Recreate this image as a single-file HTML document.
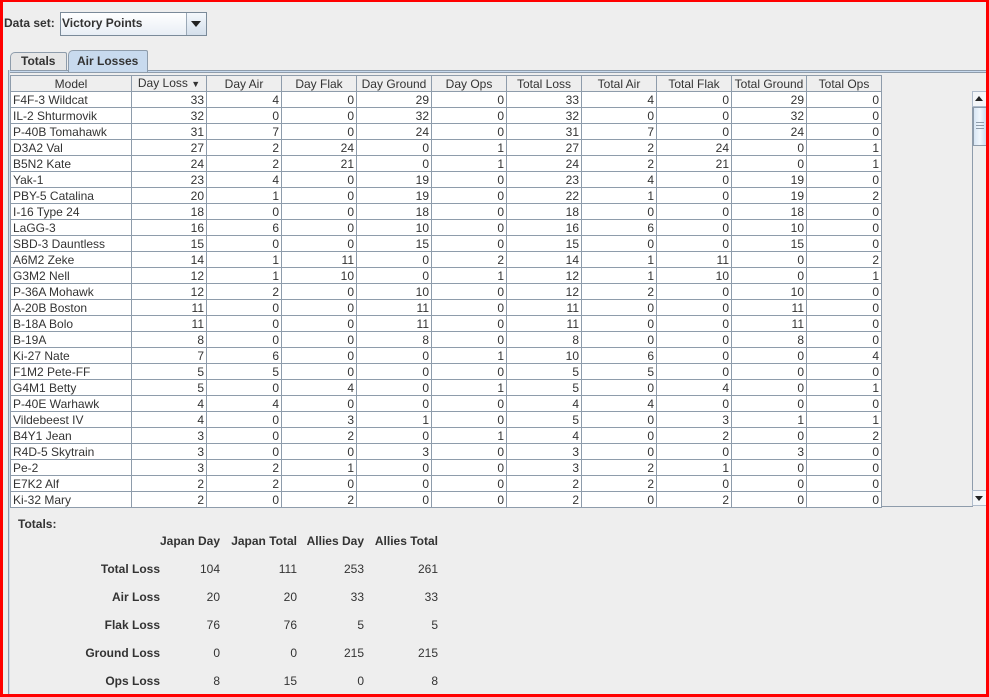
<!DOCTYPE html>
<html><head><meta charset="utf-8"><style>
*{margin:0;padding:0;box-sizing:border-box}
body{width:989px;height:697px;background:#eeeeee;position:relative;overflow:hidden;font-family:"Liberation Sans",sans-serif;font-size:12px;color:#333}
.frame{position:absolute;left:0;top:0;width:989px;height:697px;border:solid #ff0000;border-width:2px 3px 3px 3px;z-index:10;pointer-events:none}
.abs{position:absolute}
b{font-weight:bold}
table{border-collapse:collapse;table-layout:fixed;position:absolute;left:10px;top:75px}
td,th{height:16px;border:1px solid #8e9cab;padding:0 2px;white-space:nowrap;overflow:hidden;font-weight:normal;line-height:14px}
th{background:#eeeeee;text-align:center;color:#333}
td{background:#fff;text-align:right;color:#333}
td:first-child{text-align:left}
.tl{font-weight:bold;color:#333;font-size:12px;position:absolute}
.r{text-align:right}
</style></head><body>
<div class="frame"></div>
<div class="abs" style="left:4px;top:16px;font-weight:bold">Data set:</div>
<div class="abs" style="left:60px;top:12px;width:147px;height:24px;border:1px solid #7a8a99;background:linear-gradient(#fff,#e8eef5)"></div>
<div class="abs" style="left:62px;top:16px;font-weight:bold">Victory Points</div>
<div class="abs" style="left:186px;top:13px;width:20px;height:22px;border-left:1px solid #9aa8b6;background:linear-gradient(#f4f8fc,#d4dfeb)"></div>
<div class="abs" style="left:191px;top:21px;width:0;height:0;border-left:5px solid transparent;border-right:5px solid transparent;border-top:6px solid #222"></div>
<!-- tabs -->
<div class="abs" style="left:10px;top:52px;width:57px;height:19px;border:1px solid #8e9cab;border-bottom:none;border-radius:5px 2px 0 0;background:#e6e6e6"></div>
<div class="abs" style="left:21px;top:54px;font-weight:bold">Totals</div>
<div class="abs" style="left:68px;top:50px;width:80px;height:22px;border:1px solid #8e9cab;border-bottom:none;border-radius:5px 2px 0 0;background:#c8daee;z-index:2"></div>
<div class="abs" style="left:77px;top:54px;font-weight:bold;z-index:3">Air Losses</div>
<div class="abs" style="left:8px;top:70px;width:979px;height:3px;border-top:1px solid #8e9cab;border-bottom:1px solid #8e9cab;background:#c8daee"></div>
<div class="abs" style="left:8px;top:70px;width:2px;height:627px;border-left:1px solid #8e9cab;background:#c8daee"></div>
<div class="abs" style="left:10px;top:506px;width:977px;height:1px;background:#8e9cab"></div>
<!-- scrollbar -->
<div class="abs" style="left:972px;top:91px;width:15px;height:416px;background:#eeeeee;border-left:1px solid #8e9cab"></div>
<div class="abs" style="left:972px;top:91px;width:15px;height:16px;border:1px solid #b0bccb;background:#f4f6f8"></div>
<div class="abs" style="left:975px;top:96px;border-left:4px solid transparent;border-right:4px solid transparent;border-bottom:5px solid #222"></div>
<div class="abs" style="left:973px;top:107px;width:14px;height:39px;border:1px solid #8e9cab;background:linear-gradient(90deg,#d8e6f4,#f0f6fc,#c8dcee)"></div>
<div class="abs" style="left:976px;top:122px;width:8px;height:7px;border-top:1px solid #8e9cab;border-bottom:1px solid #8e9cab"></div>
<div class="abs" style="left:976px;top:125px;width:8px;height:1px;background:#8e9cab"></div>
<div class="abs" style="left:972px;top:490px;width:15px;height:16px;border:1px solid #b0bccb;background:#f4f6f8"></div>
<div class="abs" style="left:975px;top:496px;border-left:4px solid transparent;border-right:4px solid transparent;border-top:5px solid #222"></div>
<table>
<colgroup><col style="width:121px"><col style="width:75px"><col style="width:75px"><col style="width:75px"><col style="width:75px"><col style="width:75px"><col style="width:75px"><col style="width:75px"><col style="width:75px"><col style="width:75px"><col style="width:75px"></colgroup>
<tr><th>Model</th><th>Day Loss <span style="font-size:9px">&#9660;</span></th><th>Day Air</th><th>Day Flak</th><th>Day Ground</th><th>Day Ops</th><th>Total Loss</th><th>Total Air</th><th>Total Flak</th><th>Total Ground</th><th>Total Ops</th></tr>
<tr><td>F4F-3 Wildcat</td><td>33</td><td>4</td><td>0</td><td>29</td><td>0</td><td>33</td><td>4</td><td>0</td><td>29</td><td>0</td></tr>
<tr><td>IL-2 Shturmovik</td><td>32</td><td>0</td><td>0</td><td>32</td><td>0</td><td>32</td><td>0</td><td>0</td><td>32</td><td>0</td></tr>
<tr><td>P-40B Tomahawk</td><td>31</td><td>7</td><td>0</td><td>24</td><td>0</td><td>31</td><td>7</td><td>0</td><td>24</td><td>0</td></tr>
<tr><td>D3A2 Val</td><td>27</td><td>2</td><td>24</td><td>0</td><td>1</td><td>27</td><td>2</td><td>24</td><td>0</td><td>1</td></tr>
<tr><td>B5N2 Kate</td><td>24</td><td>2</td><td>21</td><td>0</td><td>1</td><td>24</td><td>2</td><td>21</td><td>0</td><td>1</td></tr>
<tr><td>Yak-1</td><td>23</td><td>4</td><td>0</td><td>19</td><td>0</td><td>23</td><td>4</td><td>0</td><td>19</td><td>0</td></tr>
<tr><td>PBY-5 Catalina</td><td>20</td><td>1</td><td>0</td><td>19</td><td>0</td><td>22</td><td>1</td><td>0</td><td>19</td><td>2</td></tr>
<tr><td>I-16 Type 24</td><td>18</td><td>0</td><td>0</td><td>18</td><td>0</td><td>18</td><td>0</td><td>0</td><td>18</td><td>0</td></tr>
<tr><td>LaGG-3</td><td>16</td><td>6</td><td>0</td><td>10</td><td>0</td><td>16</td><td>6</td><td>0</td><td>10</td><td>0</td></tr>
<tr><td>SBD-3 Dauntless</td><td>15</td><td>0</td><td>0</td><td>15</td><td>0</td><td>15</td><td>0</td><td>0</td><td>15</td><td>0</td></tr>
<tr><td>A6M2 Zeke</td><td>14</td><td>1</td><td>11</td><td>0</td><td>2</td><td>14</td><td>1</td><td>11</td><td>0</td><td>2</td></tr>
<tr><td>G3M2 Nell</td><td>12</td><td>1</td><td>10</td><td>0</td><td>1</td><td>12</td><td>1</td><td>10</td><td>0</td><td>1</td></tr>
<tr><td>P-36A Mohawk</td><td>12</td><td>2</td><td>0</td><td>10</td><td>0</td><td>12</td><td>2</td><td>0</td><td>10</td><td>0</td></tr>
<tr><td>A-20B Boston</td><td>11</td><td>0</td><td>0</td><td>11</td><td>0</td><td>11</td><td>0</td><td>0</td><td>11</td><td>0</td></tr>
<tr><td>B-18A Bolo</td><td>11</td><td>0</td><td>0</td><td>11</td><td>0</td><td>11</td><td>0</td><td>0</td><td>11</td><td>0</td></tr>
<tr><td>B-19A</td><td>8</td><td>0</td><td>0</td><td>8</td><td>0</td><td>8</td><td>0</td><td>0</td><td>8</td><td>0</td></tr>
<tr><td>Ki-27 Nate</td><td>7</td><td>6</td><td>0</td><td>0</td><td>1</td><td>10</td><td>6</td><td>0</td><td>0</td><td>4</td></tr>
<tr><td>F1M2 Pete-FF</td><td>5</td><td>5</td><td>0</td><td>0</td><td>0</td><td>5</td><td>5</td><td>0</td><td>0</td><td>0</td></tr>
<tr><td>G4M1 Betty</td><td>5</td><td>0</td><td>4</td><td>0</td><td>1</td><td>5</td><td>0</td><td>4</td><td>0</td><td>1</td></tr>
<tr><td>P-40E Warhawk</td><td>4</td><td>4</td><td>0</td><td>0</td><td>0</td><td>4</td><td>4</td><td>0</td><td>0</td><td>0</td></tr>
<tr><td>Vildebeest IV</td><td>4</td><td>0</td><td>3</td><td>1</td><td>0</td><td>5</td><td>0</td><td>3</td><td>1</td><td>1</td></tr>
<tr><td>B4Y1 Jean</td><td>3</td><td>0</td><td>2</td><td>0</td><td>1</td><td>4</td><td>0</td><td>2</td><td>0</td><td>2</td></tr>
<tr><td>R4D-5 Skytrain</td><td>3</td><td>0</td><td>0</td><td>3</td><td>0</td><td>3</td><td>0</td><td>0</td><td>3</td><td>0</td></tr>
<tr><td>Pe-2</td><td>3</td><td>2</td><td>1</td><td>0</td><td>0</td><td>3</td><td>2</td><td>1</td><td>0</td><td>0</td></tr>
<tr><td>E7K2 Alf</td><td>2</td><td>2</td><td>0</td><td>0</td><td>0</td><td>2</td><td>2</td><td>0</td><td>0</td><td>0</td></tr>
<tr><td>Ki-32 Mary</td><td>2</td><td>0</td><td>2</td><td>0</td><td>0</td><td>2</td><td>0</td><td>2</td><td>0</td><td>0</td></tr>
</table>
<!-- totals -->
<div class="tl" style="left:18px;top:517px">Totals:</div>
<div class="tl r" style="left:140px;top:534px;width:80px">Japan Day</div>
<div class="tl r" style="left:216px;top:534px;width:81px">Japan Total</div>
<div class="tl r" style="left:290px;top:534px;width:74px">Allies Day</div>
<div class="tl r" style="left:358px;top:534px;width:80px">Allies Total</div>

<div class="tl r" style="left:40px;top:562px;width:120px">Total Loss</div>
<div class="tl r" style="left:40px;top:590px;width:120px">Air Loss</div>
<div class="tl r" style="left:40px;top:618px;width:120px">Flak Loss</div>
<div class="tl r" style="left:40px;top:646px;width:120px">Ground Loss</div>
<div class="tl r" style="left:40px;top:674px;width:120px">Ops Loss</div>

<div class="abs r" style="left:160px;top:562px;width:60px">104</div>
<div class="abs r" style="left:236px;top:562px;width:61px">111</div>
<div class="abs r" style="left:304px;top:562px;width:60px">253</div>
<div class="abs r" style="left:378px;top:562px;width:60px">261</div>

<div class="abs r" style="left:160px;top:590px;width:60px">20</div>
<div class="abs r" style="left:236px;top:590px;width:61px">20</div>
<div class="abs r" style="left:304px;top:590px;width:60px">33</div>
<div class="abs r" style="left:378px;top:590px;width:60px">33</div>

<div class="abs r" style="left:160px;top:618px;width:60px">76</div>
<div class="abs r" style="left:236px;top:618px;width:61px">76</div>
<div class="abs r" style="left:304px;top:618px;width:60px">5</div>
<div class="abs r" style="left:378px;top:618px;width:60px">5</div>

<div class="abs r" style="left:160px;top:646px;width:60px">0</div>
<div class="abs r" style="left:236px;top:646px;width:61px">0</div>
<div class="abs r" style="left:304px;top:646px;width:60px">215</div>
<div class="abs r" style="left:378px;top:646px;width:60px">215</div>

<div class="abs r" style="left:160px;top:674px;width:60px">8</div>
<div class="abs r" style="left:236px;top:674px;width:61px">15</div>
<div class="abs r" style="left:304px;top:674px;width:60px">0</div>
<div class="abs r" style="left:378px;top:674px;width:60px">8</div>
</body></html>
